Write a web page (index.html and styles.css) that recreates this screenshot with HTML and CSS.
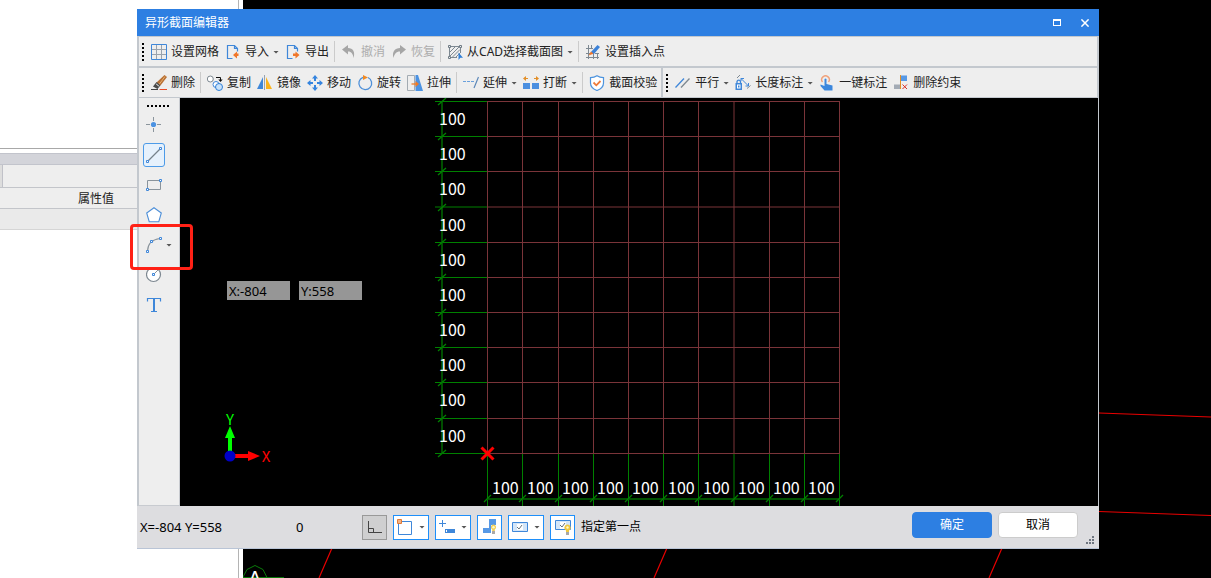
FILE: index.html
```html
<!DOCTYPE html>
<html lang="zh-CN">
<head>
<meta charset="utf-8">
<title>异形截面编辑器</title>
<link rel="stylesheet" href="styles.css">
</head>
<body>
<div class="desktop">
  <aside class="props">
    <div class="props-blank"></div>
    <div class="props-band"></div>
    <div class="props-tabs"><span class="props-tab"></span></div>
    <div class="props-head">属性值</div>
    <div class="props-row"></div>
  </aside>
  <main class="model">
    <svg class="model-svg" width="968" height="578" viewBox="243 0 968 578" fill="none" aria-hidden="true">
      <g stroke="#e80000" stroke-width="1.2">
        <path d="M1099 413 1211 417M1099 511.500 1211 515.500M332 548 319 578M667 548 654 578M1002 548 989 578"/>
      </g>
      <path d="M243 577 247 569.500 255 565.500 263 569.500 267 577.500M243 577.500H284" stroke="#0a7a0a"/>
      <text x="255" y="584" text-anchor="middle" class="axis-label">A</text>
    </svg>
  </main>
</div>

<section class="dialog" aria-label="异形截面编辑器">
  <header class="title">
    <span class="title-text">异形截面编辑器</span>
    <button class="win" aria-label="最大化"><svg width="8" height="7" viewBox="0 0 8 7"><path d="M0 0H8V7H0ZM1 2V6H7V2Z" fill="#fff" fill-rule="evenodd"/></svg></button>
    <button class="win" aria-label="关闭"><svg width="8" height="8" viewBox="0 0 8 8"><path d="M.4.4 7.600 7.600M7.600.4.4 7.600" stroke="#fff" stroke-width="1.500"/></svg></button>
  </header>

  <div class="bars">
    <div class="bar-row">
      <div class="bar grow">
        <span class="grip"></span>
        <button class="tool"><svg class="ic" viewBox="0 0 16 16" fill="none"><path d="M5.500 1V15M10.500 1V15M1 5.500H15M1 10.500H15" stroke="#9aa3ad"/><path d="M.5.5H15.500V15.500H.5Z" stroke="#3f87d9"/></svg>设置网格</button>
        <button class="tool"><svg class="ic" viewBox="0 0 16 16" fill="none"><path d="M7.500 14.500H2.500V1.500H9.500L12.500 4.500V7.500M9.500 1.500V4.500H12.500" stroke="#3f87d9" stroke-width="1.200"/><path d="M8 11 12 7.500V9.500H13.500V12H12V14.500Z" fill="#f0762a"/></svg>导入<i class="caret"></i></button>
        <button class="tool"><svg class="ic" viewBox="0 0 16 16" fill="none"><path d="M7.500 14.500H2.500V1.500H9.500L12.500 4.500V7.500M9.500 1.500V4.500H12.500" stroke="#3f87d9" stroke-width="1.200"/><path d="M14.500 11 10.500 7.500V9.500H8V12H10.500V14.500Z" fill="#f0762a"/></svg>导出</button>
        <span class="sep"></span>
        <button class="tool" disabled><svg class="ic" viewBox="0 0 16 16"><path d="M1 5.500 7 1V4C12 4 14.500 8 12.500 14 12 10 10.500 7.500 7 7.500V10.500Z" fill="#a6a6a6"/></svg>撤消</button>
        <button class="tool" disabled><svg class="ic" viewBox="0 0 16 16"><path d="M15 5.500 9 1V4C4 4 .5 8 2.500 14 3.500 10 5 7.500 9 7.500V10.500Z" fill="#a6a6a6"/></svg>恢复</button>
        <span class="sep"></span>
        <button class="tool"><svg class="ic" viewBox="0 0 16 16" fill="none"><path d="M3.500 2.500H12M2.500 3.500V12M13.500 3.500V9M4 13.500H10M3 8 8 3M3 12 12 3M5 13.500 13 5.500M8.500 13.500 13 9" stroke="#7d8891"/><path d="M1.500 1.500H3.500V3.500H1.500ZM12.500 1.500H14.500V3.500H12.500ZM1.500 12.500H3.500V14.500H1.500Z" stroke="#6f7b84"/><path d="M11.500 8.500V16L13.300 13.800H16Z" fill="#2f7fd8"/></svg>从CAD选择截面图<i class="caret"></i></button>
        <span class="sep"></span>
        <button class="tool"><svg class="ic" viewBox="0 0 16 16" fill="none"><path d="M3.500 1V15M8.500 9V15M12.500 9V15M1 4.500H8M1 13.500H14M1 9.500H5M10 9.500H14M6.500 1V5" stroke="#7d8891"/><path d="M12.500 1 15 3 8.500 10.500 5.500 8.500Z" fill="#3c82d8"/><path d="M6 7.500 8.500 9.800 3.500 11.500Z" fill="#f0762a"/></svg>设置插入点</button>
      </div>
    </div>
    <div class="bar-row">
      <div class="bar">
        <span class="grip"></span>
        <button class="tool"><svg class="ic" viewBox="0 0 16 16" fill="none"><path d="M13.500 0 16 2 9.500 10.500 5.500 7.500Z" fill="#b87035"/><path d="M14 1.500 8 9.500" stroke="#e6b070"/><path d="M5.500 7 9.500 10.300 6.500 14 2 11.500Z" fill="#4a4a4a"/><path d="M5.200 9 7.800 11" stroke="#fff"/><path d="M0 14.500H7" stroke="#444"/><path d="M8.500 14.500H16" stroke="#e84c2a"/></svg>删除</button>
        <span class="sep"></span>
        <button class="tool"><svg class="ic" viewBox="0 0 16 16" fill="none"><circle cx="3.300" cy="4" r="3" stroke="#7d8891" fill="#fff"/><path d="M9 2.500H13.500V5.500" stroke="#111"/><path d="M11.300 4.500H15.700L13.500 7Z" fill="#111"/><circle cx="9" cy="9.500" r="3" fill="#fff" stroke="#3f87d9"/><circle cx="12" cy="12" r="3.500" fill="#c8e2fa" stroke="#2f7fd8"/></svg>复制</button>
        <button class="tool"><svg class="ic" viewBox="0 0 16 16"><path d="M6 2V14H0Z" fill="#3f87d9"/><path d="M7 0H8V15H7Z" fill="#9aa3ad"/><path d="M9 2V14H15Z" fill="#fbb31c"/></svg>镜像</button>
        <button class="tool"><svg class="ic" viewBox="0 0 16 16"><path d="M8 0 11 3.500H9V6H7V3.500H5ZM8 16 11 12.500H9V10H7V12.500H5ZM0 8 3.500 5V7H6V9H3.500V11ZM16 8 12.500 5V7H10V9H12.500V11Z" fill="#3484df"/></svg>移动</button>
        <button class="tool"><svg class="ic" viewBox="0 0 16 16" fill="none"><path d="M11 2.500A6.400 6.400 0 1 1 6 2.300" stroke="#4d8fd8" stroke-width="1.300"/><path d="M6 0 11 2.500 6 5Z" fill="#f08a24"/></svg>旋转</button>
        <button class="tool"><svg class="ic" viewBox="0 0 16 16" fill="none"><path d="M.5.5H7.500V15.500H.5Z" stroke="#a3abb2"/><path d="M8.500 0H11L16 16H8.500Z" fill="#4b92e2"/><path d="M4.500 9H10" stroke="#f07a24" stroke-width="1.300"/><path d="M8.500 6 12 9 8.500 12Z" fill="#f07a24"/></svg>拉伸</button>
        <span class="sep"></span>
        <button class="tool"><svg class="ic" viewBox="0 0 16 16" fill="none"><path d="M0 6.500H3M4 6.500H7M8 6.500H11" stroke="#6aa0dc"/><path d="M15.500 2 11 13" stroke="#5b87b8" stroke-width="1.200"/></svg>延伸<i class="caret"></i></button>
        <button class="tool"><svg class="ic" viewBox="0 0 16 16" fill="none"><path d="M0 8H7V14H0ZM9 8H16V14H9Z" fill="#4b8fe0"/><path d="M2 3.500H5M11 3.500H14" stroke="#e28f28"/><path d="M0 3.500 3 1V6ZM16 3.500 13 1V6Z" fill="#e28f28"/></svg>打断<i class="caret"></i></button>
        <span class="sep"></span>
        <button class="tool"><svg class="ic" viewBox="0 0 16 16" fill="none"><path d="M8 .8C10 2.200 12 2.700 14.500 2.700V8C14.500 11.500 12 14 8 15.500 4 14 1.500 11.500 1.500 8V2.700C4 2.700 6 2.200 8 .8Z" fill="#fff" stroke="#4d94df" stroke-width="1.200"/><path d="M4.500 7.500 7.300 10.300 11.500 6" stroke="#ee7b3b" stroke-width="1.800"/></svg>截面校验</button>
      </div>
      <div class="bar grow">
        <span class="grip"></span>
        <button class="tool"><svg class="ic" viewBox="0 0 16 16" fill="none"><path d="M.5 12.500 9 3.500" stroke="#3f87d9" stroke-width="1.300"/><path d="M6 12.500 14.500 3.500" stroke="#7d8891" stroke-width="1.300"/></svg>平行<i class="caret"></i></button>
        <button class="tool"><svg class="ic" viewBox="0 0 16 16" fill="none"><path d="M2 3 5 0M12 13.500 15.500 10.500" stroke="#7d8891"/><path d="M6 3.500 13.500 11M6 3.500H9M6 3.500V6M13.500 11V8M13.500 11H10.500" stroke="#3f87d9"/><path d="M2 8V6.500A1.800 1.800 0 0 1 5.500 6.500V8" stroke="#3f87d9" stroke-width="1.300"/><path d="M.5 8H7V15H.5Z" fill="#3f87d9"/><path d="M2 9.500H5.500V13.500H2ZM3 10.500V12.500H4.500V10.500Z" fill="#fff" fill-rule="evenodd"/></svg>长度标注<i class="caret"></i></button>
        <button class="tool"><svg class="ic" viewBox="0 0 16 16" fill="none"><path d="M3.500 7A3.800 3.800 0 1 1 9.500 7" stroke="#f0a27c" stroke-width="1.400"/><path d="M5.500 4Q6.500 3 7.500 4V9L13.500 10.500V15.500H5.500L1.500 11V9.500L5.500 11Z" fill="#3c87dd"/></svg>一键标注</button>
        <button class="tool"><svg class="ic" viewBox="0 0 16 16" fill="none"><path d="M7.500.5H14V6H7.500Z" fill="#5799e6"/><path d="M1 9.500H7V14H1Z" fill="#a3abb5"/><path d="M7.500 0V14" stroke="#e28f28"/><path d="M9.500 9.500 14 14M14 9.500 9.500 14" stroke="#d93025"/></svg>删除约束</button>
      </div>
    </div>
  </div>

  <div class="work">
    <nav class="side" aria-label="绘图工具">
      <span class="side-grip"></span>
      <button class="draw" aria-label="点"><svg class="ic" viewBox="0 0 16 16" fill="none"><path d="M7.500 0V4M7.500 11V15M0 7.500H4M11 7.500H15" stroke="#8a949c"/><circle cx="7.500" cy="7.500" r="2.600" fill="#4b92e2"/></svg></button>
      <button class="draw active" aria-label="直线"><svg class="ic" viewBox="0 0 16 16" fill="none"><path d="M2 14 14 2" stroke="#76828b" stroke-width="1.300"/><path d="M.5 13.500H2.500V15.500H.5ZM13.500.5H15.500V2.500H13.500Z" stroke="#3f87d9" fill="#fff"/></svg></button>
      <button class="draw" aria-label="矩形"><svg class="ic" viewBox="0 0 16 16" fill="none"><path d="M1.500 3.500H14.500V12.500H1.500Z" stroke="#8a949c"/><path d="M.5 11.500H2.500V13.500H.5ZM13.500 2.500H15.500V4.500H13.500Z" stroke="#3f87d9" fill="#fff"/></svg></button>
      <button class="draw" aria-label="多边形"><svg class="ic" viewBox="0 0 16 16"><path d="M8 .8 15.300 6 12.800 14.700H3.200L.7 6Z" fill="#fff" stroke="#4d8fd8" stroke-width="1.100"/></svg></button>
      <button class="draw" aria-label="圆弧"><svg class="ic" viewBox="0 0 16 16" fill="none"><path d="M1.500 14Q2 3 14 1.500" stroke="#8a949c" stroke-width="1.200"/><path d="M.5 13.500H2.500V15.500H.5ZM4.500 3.500H6.500V5.500H4.500ZM13.500.5H15.500V2.500H13.500Z" stroke="#3f87d9" fill="#fff"/></svg><i class="caret"></i></button>
      <button class="draw" aria-label="圆"><svg class="ic" viewBox="0 0 16 16" fill="none"><circle cx="7.500" cy="7.500" r="7" stroke="#7d8891" stroke-width="1.200" fill="#fff"/><path d="M8.500 6.500 12.500 2.500" stroke="#8a949c"/><path d="M6.500 6.500H8.500V8.500H6.500Z" stroke="#3f87d9"/></svg></button>
      <button class="draw" aria-label="文字"><svg class="ic" viewBox="0 0 16 16" fill="none"><path d="M1.500 4.500V1.500H14.500V4.500M5 14.500H11" stroke="#3f87d9" stroke-width="1.200"/><path d="M8 1.500V14.500" stroke="#3f87d9" stroke-width="2"/></svg></button>
    </nav>
    <div class="canvas">
      <svg class="canvas-svg" width="918" height="408" viewBox="180 98 918 408" fill="none">
        <path stroke="#7a3439" d="M487.500 101V454M522.500 101V454M558.500 101V454M593.500 101V454M628.500 101V454M663.500 101V454M698.500 101V454M734 101V454M769.500 101V454M804.500 101V454M839.500 101V454M487 101.500H840M487 136.500H840M487 171.500H840M487 207H840M487 242.500H840M487 277.500H840M487 312.500H840M487 347.500H840M487 382.500H840M487 418.500H840M487 453.500H840"/>
        <path stroke="#008000" d="M435 101.500H487M435 136.500H487M435 171.500H487M435 207H487M435 242.500H487M435 277.500H487M435 312.500H487M435 347.500H487M435 382.500H487M435 418.500H487M435 453.500H487M487.500 454V506M522.500 454V506M558.500 454V506M593.500 454V506M628.500 454V506M663.500 454V506M698.500 454V506M734 454V506M769.500 454V506M804.500 454V506M839.500 454V506"/>
        <path stroke="#004e00" stroke-width="2" d="M442 101V454M487 499H840"/>
        <path stroke="#008000" stroke-width="1.300" d="M438 105 446 98M438 140 446 133M438 175 446 168M438 211 446 204M438 246 446 239M438 281 446 274M438 316 446 309M438 351 446 344M438 386 446 379M438 422 446 415M438 457 446 450M484 502 491 495M519 502 526 495M555 502 562 495M590 502 597 495M625 502 632 495M660 502 667 495M695 502 702 495M731 502 738 495M766 502 773 495M801 502 808 495M836 502 843 495"/>
        <g class="dim">
          <text x="439" y="125">100</text><text x="439" y="160">100</text><text x="439" y="195">100</text><text x="439" y="231">100</text><text x="439" y="266">100</text><text x="439" y="301">100</text><text x="439" y="336">100</text><text x="439" y="371">100</text><text x="439" y="406">100</text><text x="439" y="442">100</text>
          <text x="492" y="494">100</text><text x="527" y="494">100</text><text x="562" y="494">100</text><text x="597" y="494">100</text><text x="632" y="494">100</text><text x="668" y="494">100</text><text x="703" y="494">100</text><text x="738" y="494">100</text><text x="773" y="494">100</text><text x="808" y="494">100</text>
        </g>
        <path stroke="#ff0000" stroke-width="3" d="M481.500 447.500 493.500 459.500M493.500 447.500 481.500 459.500"/>
        <path d="M228 452V438H225L230 426 235 438H232V452Z" fill="#00ff00"/>
        <path d="M234 454H248V451L260 456 248 461V458H234Z" fill="#ff0000"/>
        <circle cx="230" cy="456" r="5.500" fill="#0000c8"/>
        <text class="axis" x="230" y="425" text-anchor="middle" fill="#00ff00">Y</text>
        <text class="axis" x="266" y="462" text-anchor="middle" fill="#ff0000">X</text>
      </svg>
      <div class="coords">
        <input class="coord" aria-label="X 坐标" value="X:-804">
        <input class="coord" aria-label="Y 坐标" value="Y:558">
      </div>
    </div>
  </div>

  <footer class="status">
    <span class="pos">X=-804 Y=558</span>
    <span class="zero">0</span>
    <button class="snap pressed" aria-label="正交"><svg class="ic" viewBox="0 0 16 16" fill="none"><path d="M1.500 2V13.500H15M1.500 9.500H6.500V13" stroke="#444"/></svg></button>
    <button class="snap" aria-label="捕捉"><svg class="ic" viewBox="0 0 16 16" fill="none"><path d="M1.500 2.500H14.500V15.500H1.500Z" stroke="#3f87d9"/><path d="M.5.5H4.500V4.500H.5Z" fill="#f3b285" stroke="#e07a36"/></svg><i class="caret"></i></button>
    <button class="snap" aria-label="动态输入"><svg class="ic" viewBox="0 0 16 16" fill="none"><path d="M0 4.500H7M3.500 1V8" stroke="#3f87d9"/><path d="M6 10H16V14H6Z" fill="#3f87d9"/><path d="M7 11H8V13H7Z" fill="#fff"/></svg><i class="caret"></i></button>
    <button class="snap" aria-label="约束显示"><svg class="ic" viewBox="0 0 16 16"><path d="M7 0H14V6H9V14H1V9H7Z" fill="#5799e6"/><path d="M11.500 5.500A2.700 2.700 0 0 1 12.800 10.500V13H10.200V10.500A2.700 2.700 0 0 1 11.500 5.500Z" fill="#f2cf55"/><path d="M10 12H13V15H10Z" fill="#a8a8a8"/><circle cx="11.500" cy="8.300" r="1.200" fill="#fff8c8"/></svg></button>
    <button class="snap" aria-label="标注"><svg class="ic" viewBox="0 0 16 16" fill="none"><path d="M.5 3.500H15.500V12.500H.5Z" fill="#d3e5f8" stroke="#3f87d9"/><path d="M5 5H11V11H5Z" fill="#fff"/><path d="M5 8 7 10 10 6" stroke="#66727c"/></svg><i class="caret"></i></button>
    <button class="snap" aria-label="标注显示"><svg class="ic" viewBox="0 0 16 16" fill="none"><path d="M.5 1.500H15.500V10.500H.5Z" fill="#d3e5f8" stroke="#3f87d9"/><path d="M5 3H11V10H5Z" fill="#fff"/><path d="M5 6 7 8 10 4" stroke="#66727c"/><path d="M12.500 5.500A3.200 3.200 0 0 1 14 11.500V14H11V11.500A3.200 3.200 0 0 1 12.500 5.500Z" fill="#f0c83f"/><path d="M11 13H14V16H11Z" fill="#a8a8a8"/><circle cx="12.500" cy="8.500" r="1.200" fill="#fff8c8"/></svg></button>
    <span class="hint">指定第一点</span>
    <button class="btn primary">确定</button>
    <button class="btn">取消</button>
    <svg class="sizer" width="8" height="8" viewBox="0 0 8 8"><path d="M6 0H8V2H6ZM3 3H5V5H3ZM6 3H8V5H6ZM0 6H2V8H0ZM3 6H5V8H3ZM6 6H8V8H6Z" fill="#6f7680"/></svg>
  </footer>
</section>
<div class="mark"></div>
</body>
</html>
```
FILE: styles.css
```css
* { box-sizing: border-box; }
body {
  margin: 0;
  background: #000;
  font: 12px/16px "Noto Sans", "Noto Sans CJK SC", sans-serif;
  color: #222;
  overflow: hidden;
}
button, input { font: inherit; color: inherit; margin: 0; padding: 0; border: 0; background: none; }
svg { display: block; flex: none; }

.desktop { display: flex; height: 100vh; }
.props { width: 243px; flex: none; background: #fff; border-right: 4px solid #fff; box-shadow: inset -1px 0 #b4b4b4; }
.props-blank { height: 149px; margin-right: 1px; border-bottom: 1px solid #a8a8a8; }
.props-band { height: 12px; margin-top: 4px; background: #d3d4da; border: solid #c2c4cc; border-width: 1px 0; }
.props-tabs { display: flex; height: 23px; background: #eee; border-bottom: 1px solid #c3c5ca; }
.props-tab { width: 3px; background: #ddd; border-right: 1px solid #c0c1c8; }
.props-head { height: 21px; line-height: 22px; padding-left: 78px; background: #eee; border-bottom: 1px solid #c3c5ca; }
.props-row { height: 21px; background: #eaeaea; border-bottom: 1px solid #d5d5d5; }
.model { flex: 1; min-width: 0; overflow: hidden; background: #000; }
.axis-label { font-size: 18px; fill: #fff; font-weight: 500; }

.dialog {
  position: absolute;
  inset: 9px 112px 29px 137px;
  display: flex;
  flex-direction: column;
  background: #000;
}
.title { display: flex; align-items: center; gap: 20px; height: 27px; flex: none; padding: 0 10px 0 8px; background: #2d7fe2; color: #fff; }
.title-text { flex: 1; }
.win { display: grid; place-items: center; width: 8px; height: 20px; }

.bars { display: flex; flex-direction: column; gap: 2px; padding: 1px 2px; background: #c3c8ce; flex: none; }
.bar-row { display: flex; gap: 2px; }
.bar { display: flex; align-items: center; gap: 6px; height: 29px; padding: 0 4px 0 3px; background: #eee; white-space: nowrap; }
.grow { flex: 1; min-width: 0; overflow: hidden; }
.grip { width: 3px; height: 18px; background: repeating-linear-gradient(#000 0 2px, transparent 2px 4px) 0 0 / 2px 100% no-repeat; }
.tool { display: flex; align-items: center; gap: 4px; flex: none; height: 25px; padding-top: 1px; line-height: 18px; }
.tool:disabled { color: #adadad; }
.ic { width: 16px; height: 16px; }
.caret { width: 6px; height: 3px; flex: none; background: #555; clip-path: polygon(0 0, 100% 0, 50% 100%); }
.sep { width: 1px; height: 21px; margin-left: -1px; background: #cbcbcb; flex: none; }

.work { display: flex; flex: 1; min-height: 0; border: solid #c3c8ce; border-width: 0 1px 0 2px; }
.side { display: flex; flex-direction: column; width: 41px; flex: none; padding-left: 4px; background: #eee; border: solid #c8cbd0; border-width: 0 1px 1px 0; }
.side-grip { width: 22px; height: 2px; margin: 7px 4px 3px; background: repeating-linear-gradient(90deg, #000 0 2px, transparent 2px 4px); flex: none; }
.draw { display: flex; align-items: center; gap: 4px; width: 30px; height: 24px; margin: 3px 0; padding-left: 3px; flex: none; }
.draw.active { width: 22px; padding-left: 2px; background: #e6f1fc; border: 1px solid #4d9be8; border-radius: 3px; }
.canvas { position: relative; flex: 1; min-width: 0; overflow: hidden; background: #000; }
.dim { font: 16px "Noto Sans CJK SC", sans-serif; fill: #fff; }
.axis { font: 15px "Noto Sans CJK SC", sans-serif; }
.coords { position: absolute; left: 47px; top: 183px; display: flex; gap: 9px; }
.coord { width: 63px; height: 19px; padding-left: 2px; background: #969696; color: #000; font-size: 13px; border-radius: 0; }

.status { display: flex; align-items: center; gap: 6px; height: 43px; flex: none; padding: 0 5px 0 3px; background: #dddde0; color: #000; border-bottom: 1px solid #b9c4d6; }
.pos { width: 150px; font-size: 13px; }
.zero { width: 60px; font-size: 13px; }
.snap { display: flex; align-items: center; justify-content: center; gap: 6px; min-width: 25px; height: 25px; padding: 0 3px; background: #fff; border: 1px solid #1e8ffa; flex: none; }
.snap.pressed { background: #cfcfd0; border-color: #999; }
.hint { flex: 1; line-height: 18px; white-space: nowrap; }
.btn { width: 80px; height: 26px; margin-bottom: 4px; background: #fff; border: 1px solid #ccc; border-radius: 4px; flex: none; }
.btn.primary { background: #2d7fe2; border-color: #2d7fe2; color: #fff; }
.sizer { margin: 26px 0 0 2px; }

.mark { position: absolute; left: 130px; top: 224px; width: 63px; height: 46px; border: 3px solid #ff2116; border-radius: 4px; }
```
